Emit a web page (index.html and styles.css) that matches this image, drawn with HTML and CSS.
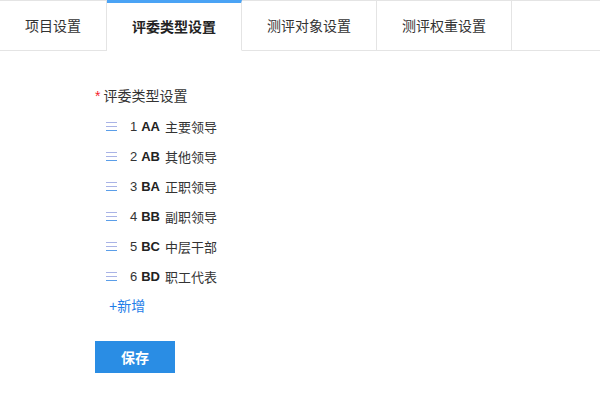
FILE: index.html
```html
<!DOCTYPE html>
<html lang="zh">
<head>
<meta charset="utf-8">
<link rel="stylesheet" href="styles.css">
</head>
<body>
<div class="tabs">
  <div class="tab">项目设置</div>
  <div class="tab active">评委类型设置</div>
  <div class="tab">测评对象设置</div>
  <div class="tab">测评权重设置</div>
  <div class="tab-rest"></div>
</div>
<div class="content">
  <div class="label"><span class="req">*</span>评委类型设置</div>
  <ul class="list">
    <li class="item"><span class="drag"><i></i><i></i><i></i></span><span class="num">1</span><b>AA</b><span>主要领导</span></li>
    <li class="item"><span class="drag"><i></i><i></i><i></i></span><span class="num">2</span><b>AB</b><span>其他领导</span></li>
    <li class="item"><span class="drag"><i></i><i></i><i></i></span><span class="num">3</span><b>BA</b><span>正职领导</span></li>
    <li class="item"><span class="drag"><i></i><i></i><i></i></span><span class="num">4</span><b>BB</b><span>副职领导</span></li>
    <li class="item"><span class="drag"><i></i><i></i><i></i></span><span class="num">5</span><b>BC</b><span>中层干部</span></li>
    <li class="item"><span class="drag"><i></i><i></i><i></i></span><span class="num">6</span><b>BD</b><span>职工代表</span></li>
  </ul>
  <div class="add">+新增</div>
  <button class="save">保存</button>
</div>
</body>
</html>
```
FILE: styles.css
```css
* { box-sizing: border-box; }
body {
  margin: 0;
  background: #fff;
  font-family: "Liberation Sans", "Noto Sans CJK SC", sans-serif;
  font-size: 14px;
  color: #333;
}
.tabs {
  display: flex;
  height: 51px;
}
.tab {
  padding: 0 25px;
  height: 51px;
  line-height: 50px;
  border-top: 1px solid #e4e4e4;
  border-bottom: 1px solid #e4e4e4;
  border-right: 1px solid #e4e4e4;
  color: #333;
  white-space: nowrap;
}
.tab.active {
  border-top: 3px solid #4aa3f5;
  border-bottom-color: #fff;
  line-height: 48px;
  font-weight: bold;
  color: #222;
}
.tab-rest {
  flex: 1;
  border-top: 1px solid #e4e4e4;
  border-bottom: 1px solid #e4e4e4;
}
.content {
  padding: 35px 0 0 95px;
}
.label {
  line-height: 20px;
  color: #333;
}
.req {
  color: #f5222d;
  margin-right: 3px;
}
.list {
  list-style: none;
  margin: 5px 0 0 0;
  padding: 0;
}
.item {
  display: flex;
  align-items: center;
  height: 30px;
  padding-left: 11px;
  font-size: 13px;
}
.drag {
  display: flex;
  flex-direction: column;
  gap: 3px;
  width: 11px;
  margin-right: 13px;
}
.drag i {
  display: block;
  height: 1px;
  background: #a9b3e6;
}
.drag i:last-child { background: #5b9ee8; }
.num { margin-right: 4px; }
.item b { margin-right: 5px; color: #222; }
.add {
  color: #1f7ee8;
  line-height: 30px;
  padding-left: 14px;
  font-size: 14px;
}
.save {
  margin-top: 20px;
  width: 80px;
  height: 32px;
  border: none;
  background: #2a8de4;
  color: #fff;
  font-family: inherit;
  font-size: 14px;
  font-weight: bold;
  padding: 0;
}
```
